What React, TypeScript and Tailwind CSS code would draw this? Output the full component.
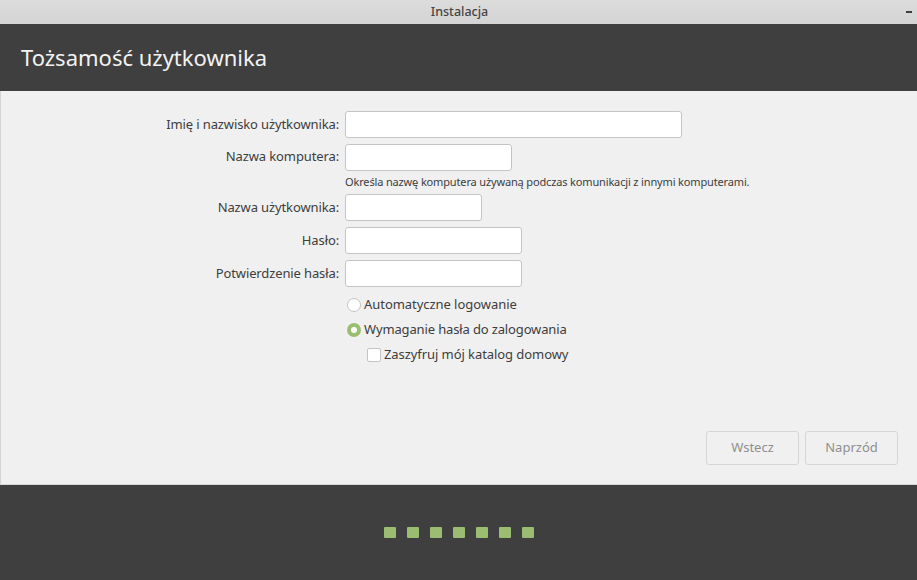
import React from "react";

const font = "[font-family:'Noto_Sans','Open_Sans',sans-serif]";

function Field({ label, width, raised }: { label: string; width: string; raised?: boolean }) {
  return (
    <div className="flex items-center h-[27px]">
      <div className={`w-[339px] text-right text-[13px] leading-[25px] text-[#3d3d3d] tracking-[-0.12px] whitespace-nowrap ${raised ? "pb-[3px]" : "pb-[1px]"}`}>{label}</div>
      <div className={`ml-[6px] h-[27px] bg-white border border-[#c4c4c4] rounded-[3px] ${width}`} />
    </div>
  );
}

export default function App() {
  return (
    <div className={`w-[917px] h-[580px] flex flex-col overflow-hidden ${font}`}>
      <div className="relative h-[24px] shrink-0 flex items-center justify-center pl-[2px] bg-gradient-to-b from-[#dcdcdc] to-[#d4d4d4] text-[12.5px] text-[#454545] font-medium">
        <span>Instalacja</span>
        <span className="absolute right-[5px] top-[11px] w-[6px] h-[2px] bg-[#3f3f3f]" />
      </div>
      <div className="h-[67px] shrink-0 bg-[#3f3f3f] flex items-center pl-[21px] text-[22px] text-[#f2f2f2]">
        Tożsamość użytkownika
      </div>
      <div className="h-[393px] shrink-0 bg-[#f0f0f0] border-l border-[#d4d4d4] flex flex-col">
        <div className="-ml-px pt-[20px] flex flex-col">
          <Field label="Imię i nazwisko użytkownika:" width="w-[337px]" />
          <div className="h-[6px]" />
          <Field label="Nazwa komputera:" width="w-[167px]" raised />
          <div className="ml-[345px] h-[23px] flex items-center text-[11px] text-[#3d3d3d] tracking-[-0.15px] whitespace-nowrap">
            Określa nazwę komputera używaną podczas komunikacji z innymi komputerami.
          </div>
          <Field label="Nazwa użytkownika:" width="w-[137px]" />
          <div className="h-[6px]" />
          <Field label="Hasło:" width="w-[177px]" />
          <div className="h-[6px]" />
          <Field label="Potwierdzenie hasła:" width="w-[177px]" />
          <div className="h-[5px]" />
          <div className="ml-[347px] h-[25px] flex items-center text-[13px] tracking-[-0.05px] text-[#3d3d3d]">
            <span className="w-[14px] h-[14px] rounded-full bg-white border border-[#c4c4c4] mr-[3px]" />
            Automatyczne logowanie
          </div>
          <div className="ml-[347px] h-[25px] flex items-center text-[13px] tracking-[-0.14px] text-[#3d3d3d]">
            <span className="w-[14px] h-[14px] rounded-full bg-[#9bbd72] flex items-center justify-center mr-[3px]">
              <span className="w-[6px] h-[6px] rounded-full bg-white" />
            </span>
            Wymaganie hasła do zalogowania
          </div>
          <div className="ml-[367px] h-[25px] flex items-center text-[13px] tracking-[-0.07px] text-[#3d3d3d]">
            <span className="w-[14px] h-[14px] rounded-[2px] bg-white border border-[#c4c4c4] mr-[3px]" />
            Zaszyfruj mój katalog domowy
          </div>
        </div>
        <div className="mt-auto mb-[19px] mr-[19px] flex justify-end gap-[6px]">
          <button className="w-[93px] h-[34px] border border-[#d6d6d6] rounded-[3px] bg-[#f0f0f0] text-[13px] text-[#8f8f8f]">Wstecz</button>
          <button className="w-[93px] h-[34px] border border-[#d6d6d6] rounded-[3px] bg-[#f0f0f0] text-[13px] text-[#8f8f8f]">Naprzód</button>
        </div>
      </div>
      <div className="flex-1 bg-[#3f3f3f] border-t border-[#d8d8d8] flex justify-center pt-[42px] gap-[11px]">
        {[0, 1, 2, 3, 4, 5, 6].map((i) => (
          <span key={i} className="w-[12px] h-[11px] rounded-[1px] bg-[#9bbd72]" />
        ))}
      </div>
    </div>
  );
}
